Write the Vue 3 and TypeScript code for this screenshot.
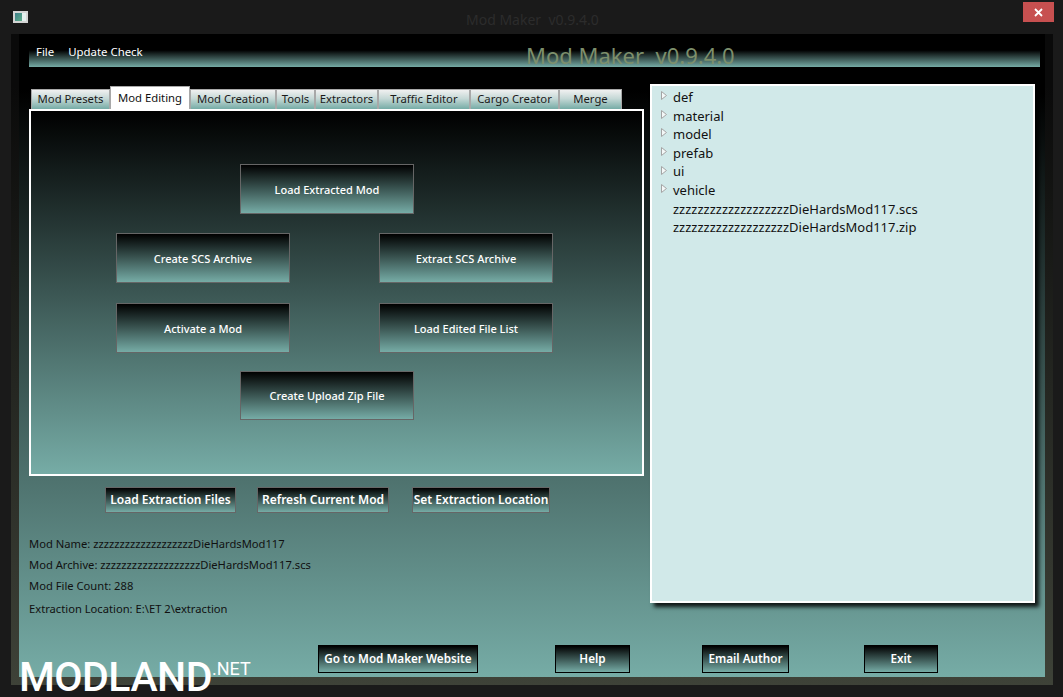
<script setup lang="ts">
interface Tab {
  label: string;
  width: number;
  active?: boolean;
}

const tabs: Tab[] = [
  { label: "Mod Presets", width: 79 },
  { label: "Mod Editing", width: 80, active: true },
  { label: "Mod Creation", width: 86 },
  { label: "Tools", width: 39 },
  { label: "Extractors", width: 63 },
  { label: "Traffic Editor", width: 92 },
  { label: "Cargo Creator", width: 89 },
  { label: "Merge", width: 63 },
];

const folders = ["def", "material", "model", "prefab", "ui", "vehicle"];
const files = ["zzzzzzzzzzzzzzzzzzzDieHardsMod117.scs", "zzzzzzzzzzzzzzzzzzzDieHardsMod117.zip"];
</script>

<template>
  <div class="window">
    <div class="titlebar">
      <svg class="app-icon" width="15" height="12" viewBox="0 0 15 12">
        <defs>
          <linearGradient id="iconFill" x1="0" y1="0" x2="1" y2="1">
            <stop offset="0" stop-color="#3d7f8a" />
            <stop offset="1" stop-color="#5fae8a" />
          </linearGradient>
        </defs>
        <rect width="15" height="12" fill="#d4d4d4" />
        <rect x="2" y="2" width="7" height="8" fill="url(#iconFill)" />
        <rect x="9" y="2" width="4" height="8" fill="#e4f0ee" />
      </svg>
      <span class="window-title">Mod Maker&nbsp; v0.9.4.0</span>
      <button class="close">
        <svg width="9" height="9" viewBox="0 0 9 9">
          <path d="M1 1 L8 8 M8 1 L1 8" stroke="#fff" stroke-width="1.8" />
        </svg>
      </button>
    </div>

    <div class="frame">
      <div class="inner">
        <header class="menubar">
          <span class="menu-item">File</span>
          <span class="menu-item">Update Check</span>
          <span class="app-title">Mod Maker&nbsp; v0.9.4.0</span>
        </header>

        <div class="columns">
          <section class="left">
            <nav class="tabs">
              <div
                v-for="tab in tabs"
                :key="tab.label"
                class="tab"
                :class="{ active: tab.active }"
                :style="{ width: tab.width + 'px' }"
              >
                {{ tab.label }}
              </div>
            </nav>
            <div class="tab-panel">
              <div class="btn-row center"><button class="big-btn">Load Extracted Mod</button></div>
              <div class="btn-row split">
                <button class="big-btn">Create SCS Archive</button>
                <button class="big-btn">Extract SCS Archive</button>
              </div>
              <div class="btn-row split">
                <button class="big-btn">Activate a Mod</button>
                <button class="big-btn">Load Edited File List</button>
              </div>
              <div class="btn-row center last"><button class="big-btn">Create Upload Zip File</button></div>
            </div>

            <div class="actions">
              <button class="small-btn a1">Load Extraction Files</button>
              <button class="small-btn a2">Refresh Current Mod</button>
              <button class="small-btn a3">Set Extraction Location</button>
            </div>

            <div class="info">
              <p>Mod Name: zzzzzzzzzzzzzzzzzzzDieHardsMod117</p>
              <p>Mod Archive: zzzzzzzzzzzzzzzzzzzDieHardsMod117.scs</p>
              <p>Mod File Count: 288</p>
              <p class="location">Extraction Location: E:\ET 2\extraction</p>
            </div>
          </section>

          <aside class="tree">
            <div v-for="name in folders" :key="name" class="tree-row">
              <svg class="arrow" width="6" height="9" viewBox="0 0 6 9">
                <path d="M0.5 0.5 L5.5 4.5 L0.5 8.5 Z" fill="#f4f8f8" stroke="#a4a4a4" stroke-width="1" />
              </svg>
              <span>{{ name }}</span>
            </div>
            <div v-for="name in files" :key="name" class="tree-row file">{{ name }}</div>
          </aside>
        </div>

        <footer class="bottom">
          <button class="foot-btn b1">Go to Mod Maker Website</button>
          <button class="foot-btn b2">Help</button>
          <button class="foot-btn b3">Email Author</button>
          <button class="foot-btn b4">Exit</button>
        </footer>
      </div>
    </div>

    <div class="watermark">
      <span>MODLAND</span>
      <span class="net">.NET</span>
    </div>
  </div>
</template>

<style>
html,
body {
  margin: 0;
  background: #1a1a1a;
}
</style>

<style scoped>
.window {
  position: relative;
  width: 1063px;
  height: 697px;
  overflow: hidden;
  background: #1a1a1a;
  font-family: "Noto Sans", "Open Sans", sans-serif;
  font-size: 12px;
  display: flex;
  flex-direction: column;
}

.titlebar {
  position: relative;
  height: 34px;
  flex: none;
}

.app-icon {
  position: absolute;
  left: 13px;
  top: 11px;
}

.window-title {
  position: absolute;
  left: 466px;
  top: 10px;
  font-size: 14px;
  line-height: 20px;
  color: #2c2c2c;
  white-space: nowrap;
}

.close {
  position: absolute;
  left: 1023px;
  top: 2px;
  width: 31px;
  height: 20px;
  border: 0;
  padding: 0;
  background: #c75050;
  display: flex;
  align-items: center;
  justify-content: center;
}

.frame {
  height: 651px;
  margin: 0 10px 0 11px;
  padding: 0 8px 8px;
  box-sizing: border-box;
  background: linear-gradient(180deg, #0a0a0a 0%, #0a0a0a 8%, #3e4238 100%);
  display: flex;
}

.inner {
  flex: 1;
  padding: 9px 5px 4px 10px;
  background: linear-gradient(180deg, #000 0%, #000 8.7%, #76aca6 100%);
  display: flex;
  flex-direction: column;
}

.menubar {
  height: 24px;
  flex: none;
  display: flex;
  align-items: flex-start;
  background: linear-gradient(180deg, #000 0%, #000 30%, #76aca6 100%);
  color: #fff;
}

.menu-item {
  margin-left: 7px;
  line-height: 18px;
  font-size: 11.4px;
}

.menu-item + .menu-item {
  margin-left: 14px;
}

.app-title {
  position: absolute;
  left: 526px;
  top: 41px;
  font-size: 22px;
  line-height: 28px;
  color: #7d8f6c;
  white-space: nowrap;
}

.columns {
  display: flex;
  gap: 6px;
  margin-top: 17px;
  align-items: flex-start;
}

.left {
  width: 615px;
}

.tabs {
  height: 25px;
  display: flex;
  align-items: flex-end;
  padding-left: 2px;
}

.tab {
  height: 20px;
  box-sizing: border-box;
  border: 1px solid #a8a8a8;
  border-bottom: 0;
  background: linear-gradient(180deg, #f0f0f0 0%, #c5d8d6 45%, #76aca6 100%);
  color: #1a1a1a;
  font-size: 11.3px;
  text-align: center;
  line-height: 18px;
  white-space: nowrap;
}

.tab.active {
  height: 23px;
  background: #fff;
  color: #111;
  line-height: 22px;
}

.tab-panel {
  height: 367px;
  box-sizing: border-box;
  border: 2px solid #fff;
  padding: 53px 0 0;
  background: linear-gradient(180deg, #000 0%, #76aca6 100%);
}

.btn-row {
  display: flex;
  margin-bottom: 20px;
}

.btn-row:first-child {
  margin-bottom: 19px;
}

.btn-row.center {
  margin-left: 209px;
}

.btn-row.split {
  margin-left: 85px;
  gap: 89px;
}

.btn-row.split:nth-child(3) {
  margin-bottom: 18px;
}

.big-btn,
.small-btn,
.foot-btn {
  font-family: inherit;
  color: #fff;
  padding: 0 0 2px;
  background: linear-gradient(180deg, #000 0%, #76aca6 100%);
  white-space: nowrap;
}

.big-btn {
  width: 174px;
  height: 50px;
  border: 1px solid #666;
  padding: 0;
  font-size: 11px;
  font-weight: 500;
}

.btn-row.last {
  margin-bottom: 0;
}

.btn-row.last .big-btn {
  height: 49px;
}

.actions {
  display: flex;
  margin-top: 11px;
  padding-left: 76px;
}

.small-btn {
  height: 26px;
  border: 1px solid #666;
  font-size: 12px;
  font-weight: 600;
}

.a1 {
  width: 131px;
}

.a2 {
  width: 132px;
  margin-left: 21px;
}

.a3 {
  width: 138px;
  margin-left: 23px;
}

.info {
  margin-top: 20px;
  color: #111;
  font-size: 11.2px;
}

.info p {
  margin: 0;
  line-height: 21px;
  white-space: nowrap;
}

.info .location {
  margin-top: 2px;
}

.tree {
  width: 385px;
  height: 519px;
  box-sizing: border-box;
  border: 2px solid #fff;
  padding: 2px 0 0 9px;
  background: #d1e9e9;
  box-shadow: 4px 4px 4px rgba(0, 0, 0, 0.85);
  color: #111;
  font-size: 13px;
}

.tree-row {
  display: flex;
  align-items: center;
  height: 18.6px;
  line-height: 18.6px;
  white-space: nowrap;
}

.arrow {
  margin-right: 6px;
  margin-top: -3px;
  flex: none;
}

.file {
  padding-left: 12px;
}

.bottom {
  display: flex;
  margin-top: auto;
  padding-left: 289px;
}

.foot-btn {
  height: 28px;
  border: 1px solid #000;
  font-size: 11.7px;
  font-weight: 600;
}

.b1 {
  width: 160px;
}

.b2 {
  width: 75px;
  margin-left: 77px;
}

.b3 {
  width: 87px;
  margin-left: 72px;
}

.b4 {
  width: 74px;
  margin-left: 75px;
}

.watermark {
  position: absolute;
  left: 19px;
  top: 657px;
  display: flex;
  align-items: flex-start;
  color: #fff;
  font-family: "Roboto", sans-serif;
  font-size: 41px;
  font-weight: 500;
  letter-spacing: -0.5px;
  line-height: 40px;
  white-space: nowrap;
}

.net {
  margin-top: 4px;
  font-size: 18px;
  font-weight: 400;
  line-height: 16px;
  letter-spacing: 0;
}
</style>
